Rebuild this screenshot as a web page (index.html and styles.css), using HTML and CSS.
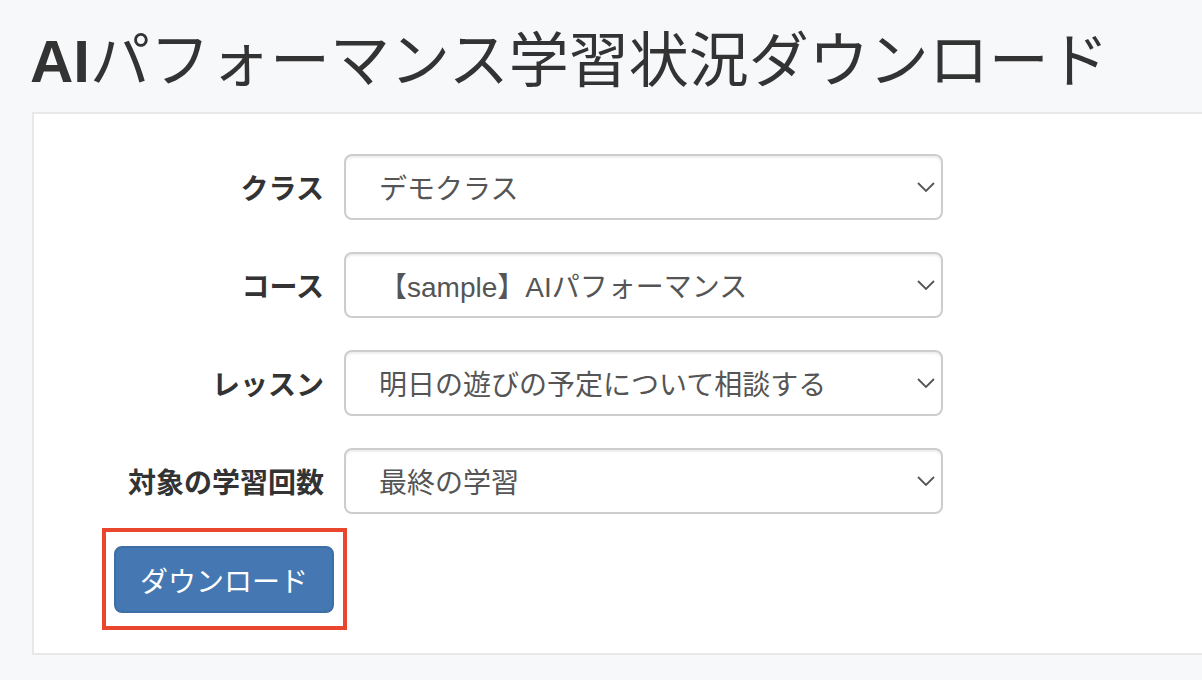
FILE: index.html
```html
<!DOCTYPE html>
<html lang="ja">
<head>
<meta charset="utf-8">
<title>AIパフォーマンス学習状況ダウンロード</title>
<link rel="stylesheet" href="styles.css">
</head>
<body>
<header class="page-header">
  <h1 class="page-title"><span class="title-latin">AI</span>パフォーマンス学習状況ダウンロード</h1>
</header>
<main class="card">
  <form class="form">
    <div class="row">
      <label class="label">クラス</label>
      <div class="select"><span class="select-text">デモクラス</span><svg class="chevron" viewBox="0 0 18 10" width="18" height="10"><path d="M1 1 L9 9 L17 1" fill="none" stroke="#555" stroke-width="1.8"/></svg></div>
    </div>
    <div class="row">
      <label class="label">コース</label>
      <div class="select"><span class="select-text">【sample】AIパフォーマンス</span><svg class="chevron" viewBox="0 0 18 10" width="18" height="10"><path d="M1 1 L9 9 L17 1" fill="none" stroke="#555" stroke-width="1.8"/></svg></div>
    </div>
    <div class="row">
      <label class="label">レッスン</label>
      <div class="select"><span class="select-text">明日の遊びの予定について相談する</span><svg class="chevron" viewBox="0 0 18 10" width="18" height="10"><path d="M1 1 L9 9 L17 1" fill="none" stroke="#555" stroke-width="1.8"/></svg></div>
    </div>
    <div class="row">
      <label class="label">対象の学習回数</label>
      <div class="select"><span class="select-text">最終の学習</span><svg class="chevron" viewBox="0 0 18 10" width="18" height="10"><path d="M1 1 L9 9 L17 1" fill="none" stroke="#555" stroke-width="1.8"/></svg></div>
    </div>
    <div class="actions">
      <div class="highlight">
        <button type="button" class="btn">ダウンロード</button>
      </div>
    </div>
  </form>
</main>
</body>
</html>
```
FILE: styles.css
```css
html, body {
  margin: 0;
  padding: 0;
}
body {
  background: #f7f8fa;
  font-family: "Liberation Sans", "Noto Sans CJK JP", sans-serif;
  color: #333;
  width: 1202px;
  height: 680px;
  overflow: hidden;
}
.page-header {
  height: 112px;
  box-sizing: border-box;
  padding: 32px 0 0 30px;
}
.page-title {
  margin: 0;
  font-size: 60px;
  line-height: 60px;
  font-weight: 400;
  color: #333;
  white-space: nowrap;
  letter-spacing: 0;
}
.title-latin {
  font-weight: 700;
}
.card {
  display: block;
  margin-left: 32px;
  background: #fff;
  border: 2px solid #e8e8e8;
  border-right: none;
  height: 543px;
  box-sizing: border-box;
}
.form {
  display: flex;
  flex-direction: column;
  gap: 32px;
  padding-top: 40px;
}
.row {
  display: grid;
  grid-template-columns: 290px 599px;
  column-gap: 20px;
  align-items: center;
}
.label {
  text-align: right;
  font-size: 28px;
  font-weight: 700;
  color: #333;
  white-space: nowrap;
}
.select {
  height: 66px;
  box-sizing: border-box;
  border: 2px solid #cdcdcd;
  border-radius: 8px;
  box-shadow: inset 0 2px 2px rgba(0,0,0,0.07);
  display: flex;
  align-items: center;
  justify-content: space-between;
  padding: 0 6px 0 33px;
  font-size: 28px;
  color: #555;
}
.select-text {
  white-space: nowrap;
}
.chevron {
  display: block;
}
.actions {
  margin-top: -18px;
  padding-left: 68px;
}
.highlight {
  display: inline-block;
  border: 4px solid #e8472d;
  padding: 14px 9px 13px 8px;
}
.btn {
  display: block;
  width: 220px;
  height: 67px;
  border: 2px solid #3d6ea6;
  border-radius: 8px;
  background: #4578b2;
  color: #fff;
  font-family: "Liberation Sans", "Noto Sans CJK JP", sans-serif;
  font-size: 28px;
  padding: 0;
  cursor: pointer;
}
```
